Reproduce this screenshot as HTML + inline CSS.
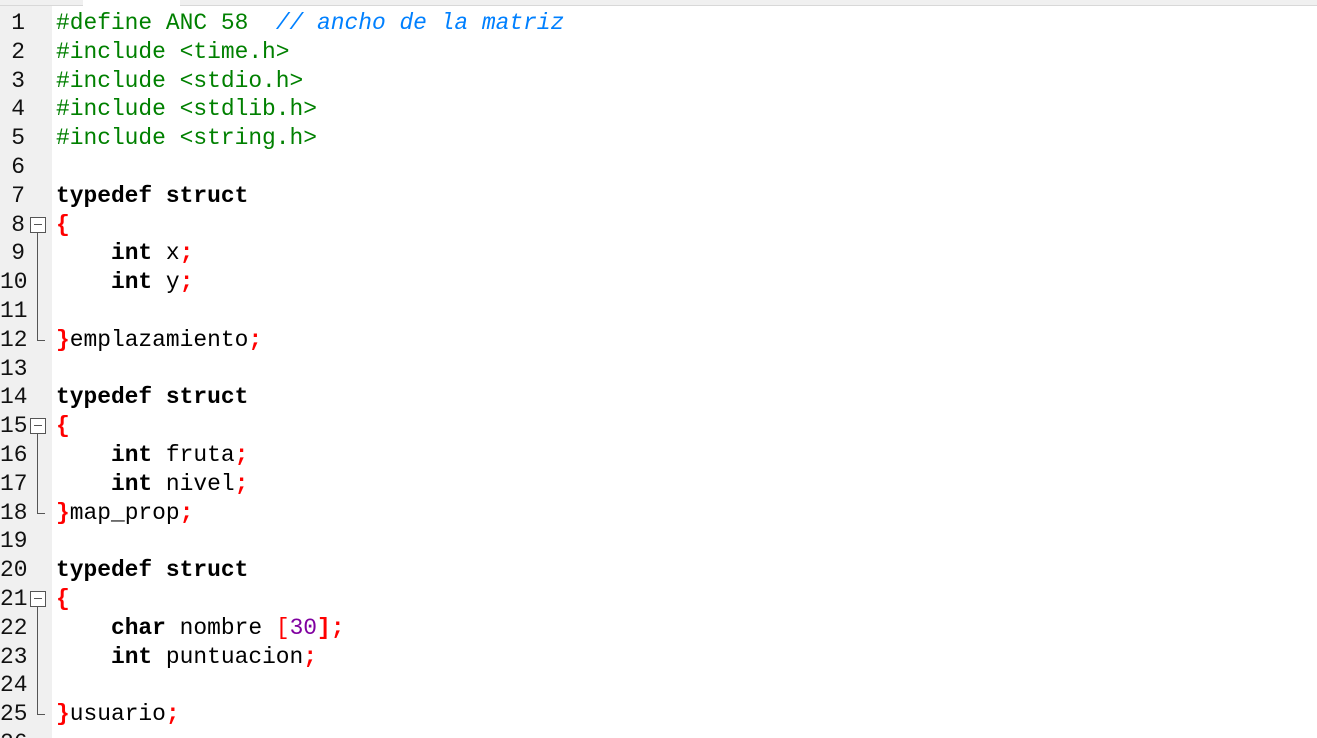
<!DOCTYPE html>
<html style="overflow:hidden;height:738px"><head><meta charset="utf-8"><style>
html,body{margin:0;width:1317px;height:738px;overflow:hidden}
body{background:#fff;position:relative;font-family:"Liberation Mono",monospace;font-size:22.9px}
.tb{position:absolute;left:0;top:0;width:1317px;height:5px;background:#f0f0f0;border-bottom:1px solid #d8d8d8}
.tab{position:absolute;left:83px;top:0;width:97px;height:6px;background:#fff}
.g{position:absolute;left:0;top:6px;width:52px;height:732px;background:#f0f0f0}
.l{position:absolute;left:0;height:29px;line-height:29px;white-space:pre}
.n{position:absolute;left:0;width:25px;text-align:right;color:#111}
.c{position:absolute;left:56px;color:#000}
.k{font-weight:bold}
.o{font-weight:bold;color:#f00}
.p{color:#008000}
.cm{color:#0080ff;font-style:italic}
.nu{color:#8000a0}
.fb{position:absolute;left:30px;width:14px;height:14px;border:1px solid #555;background:#fff}
.fb:after{content:"";position:absolute;left:3px;top:6px;width:8px;height:1px;background:#555}
.fl{position:absolute;left:37px;width:1px;background:#555}
.fe{position:absolute;left:37px;width:8px;height:1px;background:#555}
</style></head><body>
<div class="tb"></div><div class="tab"></div>
<div class="g"></div>
<div class="l" style="top:9px"><span class="n">1</span><span class="c"><span class="p">#define ANC 58</span>  <span class="cm">// ancho de la matriz</span></span></div>
<div class="l" style="top:38px"><span class="n">2</span><span class="c p">#include &lt;time.h&gt;</span></div>
<div class="l" style="top:67px"><span class="n">3</span><span class="c p">#include &lt;stdio.h&gt;</span></div>
<div class="l" style="top:95px"><span class="n">4</span><span class="c p">#include &lt;stdlib.h&gt;</span></div>
<div class="l" style="top:124px"><span class="n">5</span><span class="c p">#include &lt;string.h&gt;</span></div>
<div class="l" style="top:153px"><span class="n">6</span></div>
<div class="l" style="top:182px"><span class="n">7</span><span class="c"><span class="k">typedef struct</span></span></div>
<div class="l" style="top:211px"><span class="n">8</span><span class="c"><span class="o">{</span></span></div>
<div class="l" style="top:239px"><span class="n">9</span><span class="c">    <span class="k">int</span> x<span class="o">;</span></span></div>
<div class="l" style="top:268px"><span class="n">10</span><span class="c">    <span class="k">int</span> y<span class="o">;</span></span></div>
<div class="l" style="top:297px"><span class="n">11</span></div>
<div class="l" style="top:326px"><span class="n">12</span><span class="c"><span class="o">}</span>emplazamiento<span class="o">;</span></span></div>
<div class="l" style="top:355px"><span class="n">13</span></div>
<div class="l" style="top:383px"><span class="n">14</span><span class="c"><span class="k">typedef struct</span></span></div>
<div class="l" style="top:412px"><span class="n">15</span><span class="c"><span class="o">{</span></span></div>
<div class="l" style="top:441px"><span class="n">16</span><span class="c">    <span class="k">int</span> fruta<span class="o">;</span></span></div>
<div class="l" style="top:470px"><span class="n">17</span><span class="c">    <span class="k">int</span> nivel<span class="o">;</span></span></div>
<div class="l" style="top:499px"><span class="n">18</span><span class="c"><span class="o">}</span>map_prop<span class="o">;</span></span></div>
<div class="l" style="top:527px"><span class="n">19</span></div>
<div class="l" style="top:556px"><span class="n">20</span><span class="c"><span class="k">typedef struct</span></span></div>
<div class="l" style="top:585px"><span class="n">21</span><span class="c"><span class="o">{</span></span></div>
<div class="l" style="top:614px"><span class="n">22</span><span class="c">    <span class="k">char</span> nombre <span class="o" style="font-weight:normal">[</span><span class="nu">30</span><span class="o">];</span></span></div>
<div class="l" style="top:643px"><span class="n">23</span><span class="c">    <span class="k">int</span> puntuacion<span class="o">;</span></span></div>
<div class="l" style="top:671px"><span class="n">24</span></div>
<div class="l" style="top:700px"><span class="n">25</span><span class="c"><span class="o">}</span>usuario<span class="o">;</span></span></div>
<div class="l" style="top:729px"><span class="n">26</span></div>
<div class="fb" style="top:217px"></div><div class="fl" style="top:233px;height:107px"></div><div class="fe" style="top:340px"></div>
<div class="fb" style="top:418px"></div><div class="fl" style="top:434px;height:79px"></div><div class="fe" style="top:513px"></div>
<div class="fb" style="top:591px"></div><div class="fl" style="top:607px;height:107px"></div><div class="fe" style="top:714px"></div>
</body></html>
